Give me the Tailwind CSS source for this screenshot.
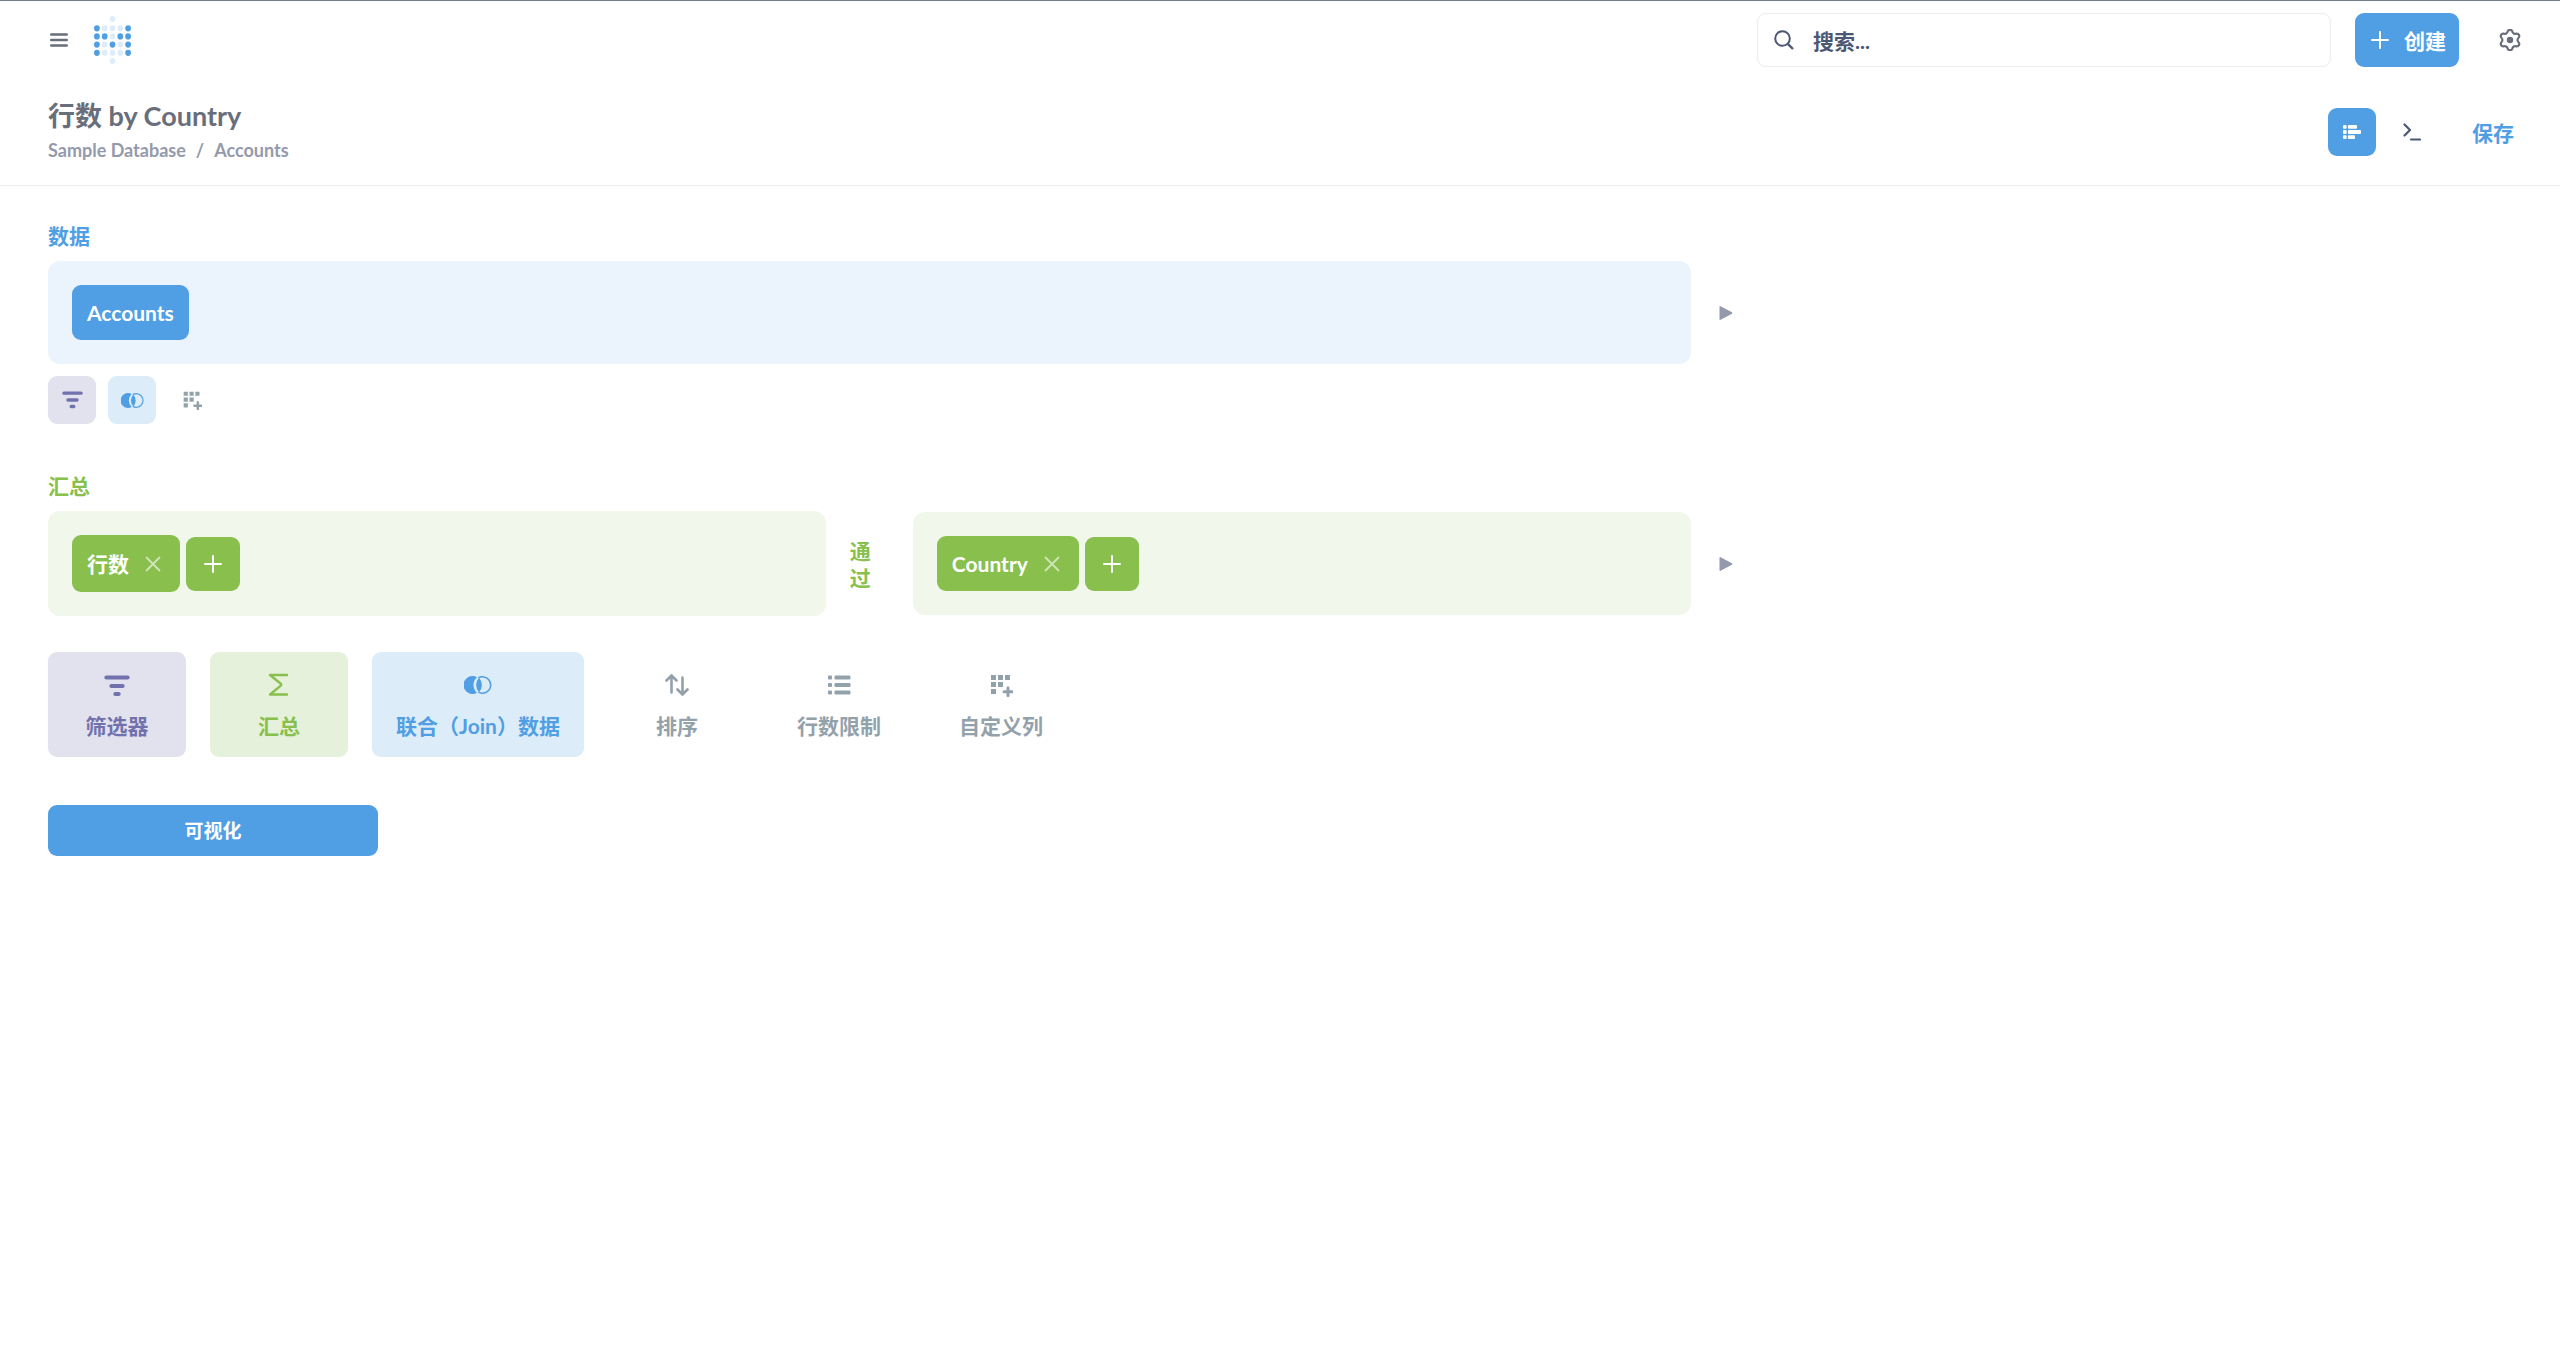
<!DOCTYPE html>
<html lang="zh-CN">

<head>
    <meta charset="UTF-8">
    <meta name="viewport" content="width=device-width, initial-scale=1.0">
    <script src="https://cdn.jsdelivr.net/npm/@tailwindcss/browser@4"></script>
    <title>行数 by Country</title>
</head>

<body class="min-h-screen bg-white border-t border-[#717c85] font-[Lato,'Noto_Sans_CJK_SC',sans-serif] font-bold text-[21px] leading-[27px] text-[#4c5773]">

    <!-- shared icons -->
    <svg class="hidden">
        <symbol id="icon-filter" viewBox="0 0 26 22">
            <path d="M2.4 2.5h21.2M7.4 11h11.2M11.4 19h3.2" fill="none" stroke="currentColor" stroke-width="4.2" stroke-linecap="round" />
        </symbol>
        <symbol id="icon-join" viewBox="0 0 28 18">
            <path d="M13 1.2A9 9 0 1 0 13 16.8A10.5 10.5 0 0 1 13 1.2Z" fill="currentColor" />
            <path d="M15 1.8A10.5 10.5 0 0 1 15 16.2A10.5 10.5 0 0 1 15 1.8Z" fill="currentColor" />
            <path d="M14.4 1.9A8.2 8.2 0 1 1 14.4 16.1" fill="none" stroke="currentColor" stroke-width="1.6" />
        </symbol>
        <symbol id="icon-column" viewBox="-1 -1 24 24">
            <path d="M1 1h5v5H1zM8 1h5v5H8zM15 1h5v5h-5zM1 8h5v5H1zM8 8h5v5H8zM1 15h5v5H1z" fill="currentColor" />
            <path d="M18 13.8v8M14 17.8h8" fill="none" stroke="currentColor" stroke-width="3" stroke-linecap="round" />
        </symbol>
        <symbol id="icon-plus" viewBox="0 0 18 18">
            <path d="M9 1v16M1 9h16" fill="none" stroke="currentColor" stroke-width="2" stroke-linecap="round" />
        </symbol>
        <symbol id="icon-close" viewBox="0 0 16 16">
            <path d="M1.5 1.5l13 13M14.5 1.5l-13 13" fill="none" stroke="currentColor" stroke-width="1.8" stroke-linecap="round" />
        </symbol>
        <symbol id="icon-play" viewBox="0 0 14 16">
            <path d="M.5 1.8v12.4q0 1.2 1.1.6l11.4-6.100q.9-.7 0-1.400L1.600 1.200Q.5.600.5 1.800Z" fill="currentColor" />
        </symbol>
    </svg>

    <header class="flex items-center justify-between h-[78px] pl-[47px] pr-[35px]">
        <div class="flex items-center gap-[23px]">
            <button aria-label="菜单" class="text-[#696e7b]">
                <svg class="w-6 h-6" viewBox="0 0 24 24" fill="none" stroke="currentColor" stroke-width="2.6" stroke-linecap="round">
                    <path d="M4.300 6.500h15.400M4.300 12h15.400M4.300 17.500h15.400" />
                </svg>
            </button>
            <a href="#" aria-label="首页">
                <svg class="w-[37px] h-12" viewBox="0 0 37 48">
                    <g fill="#ddecfa">
                        <ellipse cx="18.500" cy="3" rx="2.800" ry="3" />
                        <ellipse cx="10.700" cy="12.300" rx="2.800" ry="3" />
                        <ellipse cx="18.500" cy="12.300" rx="2.800" ry="3" />
                        <ellipse cx="26.300" cy="12.300" rx="2.800" ry="3" />
                        <ellipse cx="18.500" cy="20.400" rx="2.800" ry="3" />
                        <ellipse cx="10.700" cy="28.600" rx="2.800" ry="3" />
                        <ellipse cx="26.300" cy="28.600" rx="2.800" ry="3" />
                        <ellipse cx="10.700" cy="36.800" rx="2.800" ry="3" />
                        <ellipse cx="18.500" cy="36.800" rx="2.800" ry="3" />
                        <ellipse cx="26.300" cy="36.800" rx="2.800" ry="3" />
                        <ellipse cx="18.500" cy="45" rx="2.800" ry="3" />
                    </g>
                    <g fill="#509ee3">
                        <ellipse cx="2.900" cy="12.300" rx="2.900" ry="3.100" />
                        <ellipse cx="34.100" cy="12.300" rx="2.900" ry="3.100" />
                        <ellipse cx="2.900" cy="20.400" rx="2.900" ry="3.100" />
                        <ellipse cx="10.700" cy="20.400" rx="2.900" ry="3.100" />
                        <ellipse cx="26.300" cy="20.400" rx="2.900" ry="3.100" />
                        <ellipse cx="34.100" cy="20.400" rx="2.900" ry="3.100" />
                        <ellipse cx="2.900" cy="28.600" rx="2.900" ry="3.100" />
                        <ellipse cx="18.500" cy="28.600" rx="2.900" ry="3.100" />
                        <ellipse cx="34.100" cy="28.600" rx="2.900" ry="3.100" />
                        <ellipse cx="2.900" cy="36.800" rx="2.900" ry="3.100" />
                        <ellipse cx="34.100" cy="36.800" rx="2.900" ry="3.100" />
                    </g>
                </svg>
            </a>
        </div>

        <div class="flex items-center">
            <label class="flex items-center gap-[19px] w-[574px] h-[54px] px-4 mr-6 border border-[#eeecec] rounded-[9px]">
                <svg class="w-5 h-5 shrink-0" viewBox="0 0 20 20" fill="none" stroke="currentColor" stroke-width="2">
                    <circle cx="8.500" cy="8.500" r="7.300" />
                    <path d="M13.800 13.800L19 19" stroke-width="2.400" />
                </svg>
                <input type="text" aria-label="搜索" placeholder="搜索..." class="w-full min-w-0 outline-none placeholder:text-[#4c5773]">
            </label>
            <button class="flex items-center gap-[15px] h-[54px] pl-4 pr-[13px] mr-9 rounded-[9px] bg-[#509ee3] text-white whitespace-nowrap">
                <svg class="w-[18px] h-[18px]"><use href="#icon-plus" /></svg>
                创建
            </button>
            <button aria-label="设置" class="p-1 text-[#696e7b]">
                <svg class="w-[22px] h-[22px]" viewBox="0 0 22 22">
                    <path d="M8.800 2.100A2.500 2.500 0 0 1 13.200 2.100A3.200 3.200 0 0 0 17.600 4.600A2.500 2.500 0 0 1 19.800 8.500A3.200 3.200 0 0 0 19.800 13.500A2.500 2.500 0 0 1 17.600 17.400A3.200 3.200 0 0 0 13.200 19.900A2.500 2.500 0 0 1 8.800 19.900A3.200 3.200 0 0 0 4.400 17.400A2.500 2.500 0 0 1 2.200 13.500A3.200 3.200 0 0 0 2.200 8.500A2.500 2.500 0 0 1 4.400 4.600A3.200 3.200 0 0 0 8.800 2.100Z" fill="none" stroke="currentColor" stroke-width="2.200" stroke-linejoin="round" />
                    <circle cx="11" cy="11" r="3.200" fill="currentColor" />
                </svg>
            </button>
        </div>
    </header>

    <!-- question title -->
    <div class="flex items-center justify-between h-[107px] pl-12 pr-[46px] border-b border-[#eeecec]">
        <div class="pb-1">
            <h1 class="text-[27px] leading-9 text-[#696e7b]">行数 by Country</h1>
            <nav class="flex gap-[10px] mt-1 text-lg leading-6 text-[#949aab]">
                <a href="#">Sample Database</a>
                <span>/</span>
                <a href="#">Accounts</a>
            </nav>
        </div>
        <div class="flex items-center">
            <button aria-label="编辑器" class="flex items-center justify-center w-12 h-12 rounded-[9px] bg-[#509ee3] text-white">
                <svg class="w-[18px] h-[14px]" viewBox="0 0 18 14" fill="currentColor">
                    <rect x="0" y="0" width="3.600" height="3.800" rx="1" />
                    <rect x="4.900" y="0" width="9.100" height="3.800" rx="1" />
                    <rect x="0" y="5.100" width="3.600" height="3.800" rx="1" />
                    <rect x="4.900" y="5.100" width="13.100" height="3.800" rx="1" />
                    <rect x="0" y="10.200" width="3.600" height="3.800" rx="1" />
                    <rect x="4.900" y="10.200" width="7.100" height="3.800" rx="1" />
                </svg>
            </button>
            <button aria-label="查看 SQL" class="flex items-center justify-center w-12 h-12 ml-3 mr-9">
                <svg class="w-[18px] h-[18px]" viewBox="0 0 18 18" fill="none" stroke="currentColor" stroke-width="2.200" stroke-linecap="round" stroke-linejoin="round">
                    <path d="M1.500 1.500L7 7L1.500 12.500M8 16.500h9" />
                </svg>
            </button>
            <button class="text-[#509ee3] whitespace-nowrap">保存</button>
        </div>
    </div>

    <main class="px-12 pt-9">
        <!-- data -->
        <section>
            <h2 class="mb-3 text-[#509ee3]">数据</h2>
            <div class="flex items-center">
                <div class="w-2/3 p-6 rounded-xl bg-[#ebf4fc]">
                    <button class="block h-[55px] px-[15px] rounded-[9px] bg-[#509ee3] text-white">Accounts</button>
                </div>
                <button aria-label="预览" class="ml-7 text-[#949aab]">
                    <svg class="w-[14px] h-4"><use href="#icon-play" /></svg>
                </button>
            </div>
            <div class="flex gap-3 mt-3">
                <button aria-label="筛选器" class="flex items-center justify-center w-12 h-12 rounded-[9px] bg-[#e2e2ee] text-[#7172ad]">
                    <svg class="w-[21px] h-[18px]"><use href="#icon-filter" /></svg>
                </button>
                <button aria-label="联合数据" class="flex items-center justify-center w-12 h-12 rounded-[9px] bg-[#dcecf9] text-[#509ee3]">
                    <svg class="w-[23px] h-[15px]"><use href="#icon-join" /></svg>
                </button>
                <button aria-label="自定义列" class="flex items-center justify-center w-12 h-12 text-[#93a1ab]">
                    <svg class="w-5 h-5"><use href="#icon-column" /></svg>
                </button>
            </div>
        </section>

        <!-- summarize -->
        <section class="mt-12">
            <h2 class="mb-3 text-[#88bf4d]">汇总</h2>
            <div class="flex items-center">
                <div class="flex items-center w-2/3">
                    <div class="flex flex-1 items-center gap-[6px] p-6 rounded-xl bg-[#f1f7eb]">
                        <button class="flex items-center gap-4 h-[57px] pl-[15px] pr-[19px] rounded-[9px] bg-[#88bf4d] text-white">
                            行数
                            <svg class="w-4 h-4 text-white/60"><use href="#icon-close" /></svg>
                        </button>
                        <button aria-label="添加指标" class="flex items-center justify-center w-[54px] h-[54px] rounded-[9px] bg-[#88bf4d] text-white">
                            <svg class="w-[18px] h-[18px]"><use href="#icon-plus" /></svg>
                        </button>
                    </div>
                    <span class="w-[21px] ml-6 mr-[42px] text-[#88bf4d]">通过</span>
                    <div class="flex flex-1 items-center gap-[6px] p-6 rounded-xl bg-[#f1f7eb]">
                        <button class="flex items-center gap-4 h-[55px] pl-[15px] pr-[19px] rounded-[9px] bg-[#88bf4d] text-white">
                            Country
                            <svg class="w-4 h-4 text-white/60"><use href="#icon-close" /></svg>
                        </button>
                        <button aria-label="添加分组" class="flex items-center justify-center w-[54px] h-[54px] rounded-[9px] bg-[#88bf4d] text-white">
                            <svg class="w-[18px] h-[18px]"><use href="#icon-plus" /></svg>
                        </button>
                    </div>
                </div>
                <button aria-label="预览" class="ml-7 text-[#949aab]">
                    <svg class="w-[14px] h-4"><use href="#icon-play" /></svg>
                </button>
            </div>
        </section>

        <!-- add a step -->
        <div class="flex flex-wrap gap-6 mt-9">
            <button class="flex flex-col items-center justify-center gap-[15px] min-w-[138px] h-[105px] px-6 pt-[3px] rounded-[9px] bg-[#e2e2ee] text-[#7172ad]">
                <span class="flex items-end h-6"><svg class="w-[26px] h-[22px]"><use href="#icon-filter" /></svg></span>
                筛选器
            </button>
            <button class="flex flex-col items-center justify-center gap-[15px] min-w-[138px] h-[105px] px-6 pt-[3px] rounded-[9px] bg-[#e5f1da] text-[#88bf4d]">
                <svg class="w-6 h-6" viewBox="0 0 24 24" fill="none" stroke="currentColor" stroke-width="2.400" stroke-linecap="round" stroke-linejoin="round">
                    <path d="M20 2H3L13.500 10.500q1.300 1.200 0 2.400L3 21.500H20" />
                </svg>
                汇总
            </button>
            <button class="flex flex-col items-center justify-center gap-[15px] min-w-[138px] h-[105px] px-6 pt-[3px] rounded-[9px] bg-[#dcecf9] text-[#509ee3]">
                <span class="flex items-center h-6"><svg class="w-7 h-[18px]"><use href="#icon-join" /></svg></span>
                联合（Join）数据
            </button>
            <button class="flex flex-col items-center justify-center gap-[15px] min-w-[138px] h-[105px] px-6 pt-[3px] text-[#93a1ab]">
                <svg class="w-6 h-6" viewBox="0 0 24 24" fill="none" stroke="currentColor" stroke-width="2.600" stroke-linecap="round" stroke-linejoin="round">
                    <path d="M6.500 19.500V3M1.500 7.500L6.500 2.500L11.500 7.500M17.500 4.500V21M12.500 16.500L17.500 21.500L22.500 16.500" />
                </svg>
                排序
            </button>
            <button class="flex flex-col items-center justify-center gap-[15px] min-w-[138px] h-[105px] px-6 pt-[3px] text-[#93a1ab]">
                <svg class="w-6 h-6" viewBox="0 0 24 24" fill="currentColor">
                    <rect x="1" y="2.500" width="4" height="4" rx="1" />
                    <rect x="7.500" y="2.500" width="16" height="4" rx="1.200" />
                    <rect x="1" y="10" width="4" height="4" rx="1" />
                    <rect x="7.500" y="10" width="16" height="4" rx="1.200" />
                    <rect x="1" y="17.500" width="4" height="4" rx="1" />
                    <rect x="7.500" y="17.500" width="16" height="4" rx="1.200" />
                </svg>
                行数限制
            </button>
            <button class="flex flex-col items-center justify-center gap-[15px] min-w-[138px] h-[105px] px-6 pt-[3px] text-[#93a1ab]">
                <svg class="w-6 h-6"><use href="#icon-column" /></svg>
                自定义列
            </button>
        </div>

        <button class="block w-[330px] h-[51px] mt-12 rounded-[9px] bg-[#509ee3] text-white text-[19px]">可视化</button>
    </main>

</body>

</html>
